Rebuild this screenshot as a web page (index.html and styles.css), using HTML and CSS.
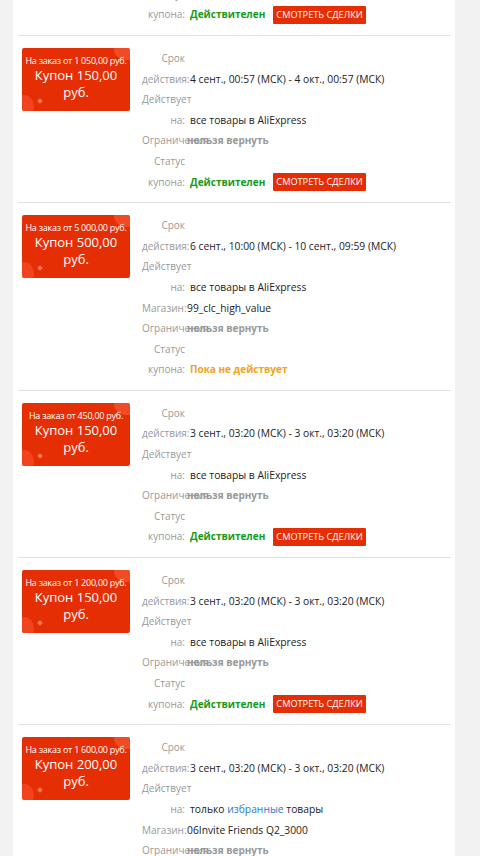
FILE: index.html
```html
<!DOCTYPE html>
<html lang="ru">
<head>
<meta charset="utf-8">
<title>Купоны</title>
<link rel="stylesheet" href="styles.css">
</head>
<body>
<div class="panel">
  <div class="list">
    <div class="coupon">
      <div class="card"><div class="cond">На заказ от 1 050,00 руб.</div><div class="amount">Купон 150,00 руб.</div><span class="spark"></span></div>
      <div class="info">
        <div class="row"><div class="lbl">Срок действия:</div><div class="val">1 сент., 00:57 (МСК) - 1 окт., 00:57 (МСК)</div></div>
        <div class="row"><div class="lbl">Действует на:</div><div class="val">все товары в AliExpress</div></div>
        <div class="row"><div class="lbl">Ограничения:</div><div class="val val-tight muted">нельзя вернуть</div></div>
        <div class="row"><div class="lbl">Статус купона:</div><div class="val"><span class="ok">Действителен</span><span class="btn">Смотреть сделки</span></div></div>
      </div>
    </div>

    <div class="coupon">
      <div class="card"><div class="cond">На заказ от 1 050,00 руб.</div><div class="amount">Купон 150,00 руб.</div><span class="spark"></span></div>
      <div class="info">
        <div class="row"><div class="lbl">Срок действия:</div><div class="val">4 сент., 00:57 (МСК) - 4 окт., 00:57 (МСК)</div></div>
        <div class="row"><div class="lbl">Действует на:</div><div class="val">все товары в AliExpress</div></div>
        <div class="row"><div class="lbl">Ограничения:</div><div class="val val-tight muted">нельзя вернуть</div></div>
        <div class="row"><div class="lbl">Статус купона:</div><div class="val"><span class="ok">Действителен</span><span class="btn">Смотреть сделки</span></div></div>
      </div>
    </div>

    <div class="coupon">
      <div class="card"><div class="cond">На заказ от 5 000,00 руб.</div><div class="amount">Купон 500,00 руб.</div><span class="spark"></span></div>
      <div class="info">
        <div class="row"><div class="lbl">Срок действия:</div><div class="val">6 сент., 10:00 (МСК) - 10 сент., 09:59 (МСК)</div></div>
        <div class="row"><div class="lbl">Действует на:</div><div class="val">все товары в AliExpress</div></div>
        <div class="row"><div class="lbl">Магазин:</div><div class="val val-tight">99_clc_high_value</div></div>
        <div class="row"><div class="lbl">Ограничения:</div><div class="val val-tight muted">нельзя вернуть</div></div>
        <div class="row"><div class="lbl">Статус купона:</div><div class="val"><span class="wait">Пока не действует</span></div></div>
      </div>
    </div>

    <div class="coupon">
      <div class="card"><div class="cond">На заказ от 450,00 руб.</div><div class="amount">Купон 150,00 руб.</div><span class="spark"></span></div>
      <div class="info">
        <div class="row"><div class="lbl">Срок действия:</div><div class="val">3 сент., 03:20 (МСК) - 3 окт., 03:20 (МСК)</div></div>
        <div class="row"><div class="lbl">Действует на:</div><div class="val">все товары в AliExpress</div></div>
        <div class="row"><div class="lbl">Ограничения:</div><div class="val val-tight muted">нельзя вернуть</div></div>
        <div class="row"><div class="lbl">Статус купона:</div><div class="val"><span class="ok">Действителен</span><span class="btn">Смотреть сделки</span></div></div>
      </div>
    </div>

    <div class="coupon">
      <div class="card"><div class="cond">На заказ от 1 200,00 руб.</div><div class="amount">Купон 150,00 руб.</div><span class="spark"></span></div>
      <div class="info">
        <div class="row"><div class="lbl">Срок действия:</div><div class="val">3 сент., 03:20 (МСК) - 3 окт., 03:20 (МСК)</div></div>
        <div class="row"><div class="lbl">Действует на:</div><div class="val">все товары в AliExpress</div></div>
        <div class="row"><div class="lbl">Ограничения:</div><div class="val val-tight muted">нельзя вернуть</div></div>
        <div class="row"><div class="lbl">Статус купона:</div><div class="val"><span class="ok">Действителен</span><span class="btn">Смотреть сделки</span></div></div>
      </div>
    </div>

    <div class="coupon">
      <div class="card"><div class="cond">На заказ от 1 600,00 руб.</div><div class="amount">Купон 200,00 руб.</div><span class="spark"></span></div>
      <div class="info">
        <div class="row"><div class="lbl">Срок действия:</div><div class="val">3 сент., 03:20 (МСК) - 3 окт., 03:20 (МСК)</div></div>
        <div class="row"><div class="lbl">Действует на:</div><div class="val">только <a class="link" href="#">избранные</a> товары</div></div>
        <div class="row"><div class="lbl">Магазин:</div><div class="val val-tight">06Invite Friends Q2_3000</div></div>
        <div class="row"><div class="lbl">Ограничения:</div><div class="val val-tight muted">нельзя вернуть</div></div>
        <div class="row"><div class="lbl">Статус купона:</div><div class="val"><span class="ok">Действителен</span><span class="btn">Смотреть сделки</span></div></div>
      </div>
    </div>
  </div>
</div>
</body>
</html>
```

FILE: styles.css
```css
* { box-sizing: border-box; }
html, body { margin: 0; padding: 0; }
body {
  background: #f2f2f2;
  font-family: "Open Sans", "Liberation Sans", sans-serif;
  font-size: 10px;
  color: #222;
  overflow: hidden;
}
.panel {
  margin: 0 25px 0 13px;
  background: #fff;
  min-height: 856px;
  overflow: hidden;
}
.list {
  margin-top: -131.2px;
}
.coupon {
  display: flex;
  margin: 0 4px 0 5px;
  padding: 12px 0 10px 4px;
  border-bottom: 1px solid #e2e2e2;
}
.card {
  position: relative;
  overflow: hidden;
  flex: 0 0 108px;
  height: 63px;
  padding-top: 7px;
  background: #e62e04;
  border-radius: 2px;
  color: #fff;
  text-align: center;
}
.card::before {
  content: "";
  position: absolute;
  right: -8px;
  top: -10px;
  width: 24px;
  height: 22px;
  border-radius: 50%;
  background: rgba(255, 110, 80, 0.45);
}
.card::after {
  content: "";
  position: absolute;
  left: -8px;
  bottom: -6px;
  width: 20px;
  height: 22px;
  border-radius: 50%;
  background: rgba(255, 100, 70, 0.4);
}
.spark {
  position: absolute;
  left: 16px;
  bottom: 8px;
  width: 4px;
  height: 4px;
  background: rgba(255, 140, 110, 0.8);
  transform: rotate(45deg);
}
.cond {
  position: relative;
  z-index: 1;
  font-size: 9px;
  line-height: 12px;
  letter-spacing: -0.25px;
  white-space: nowrap;
}
.amount {
  position: relative;
  z-index: 1;
  font-size: 13px;
  line-height: 17px;
  padding: 0 12px;
}
.info {
  flex: 1;
  margin-left: 12px;
}
.row {
  display: grid;
  grid-template-columns: 43px 1fr;
  column-gap: 5px;
  align-items: end;
  line-height: 20.6px;
}
.lbl {
  color: #999;
  text-align: right;
}
.val {
  white-space: nowrap;
  color: #222;
  font-size: 10.3px;
}
.val-tight { margin-left: -3px; }
.muted {
  color: #999;
  font-weight: 700;
  font-size: 10px;
}
.ok {
  color: #169c1a;
  font-weight: 700;
  font-size: 10px;
}
.wait {
  color: #f5a317;
  font-weight: 700;
  font-size: 10px;
}
.link {
  color: #2b7bc9;
  text-decoration: none;
}
.btn {
  display: inline-block;
  vertical-align: middle;
  margin-left: 8px;
  height: 18px;
  line-height: 18px;
  padding: 0 3px;
  background: #e62e04;
  color: #fff;
  font-size: 9.2px;
  text-transform: uppercase;
  border-radius: 1px;
  position: relative;
  top: -1px;
}
```
